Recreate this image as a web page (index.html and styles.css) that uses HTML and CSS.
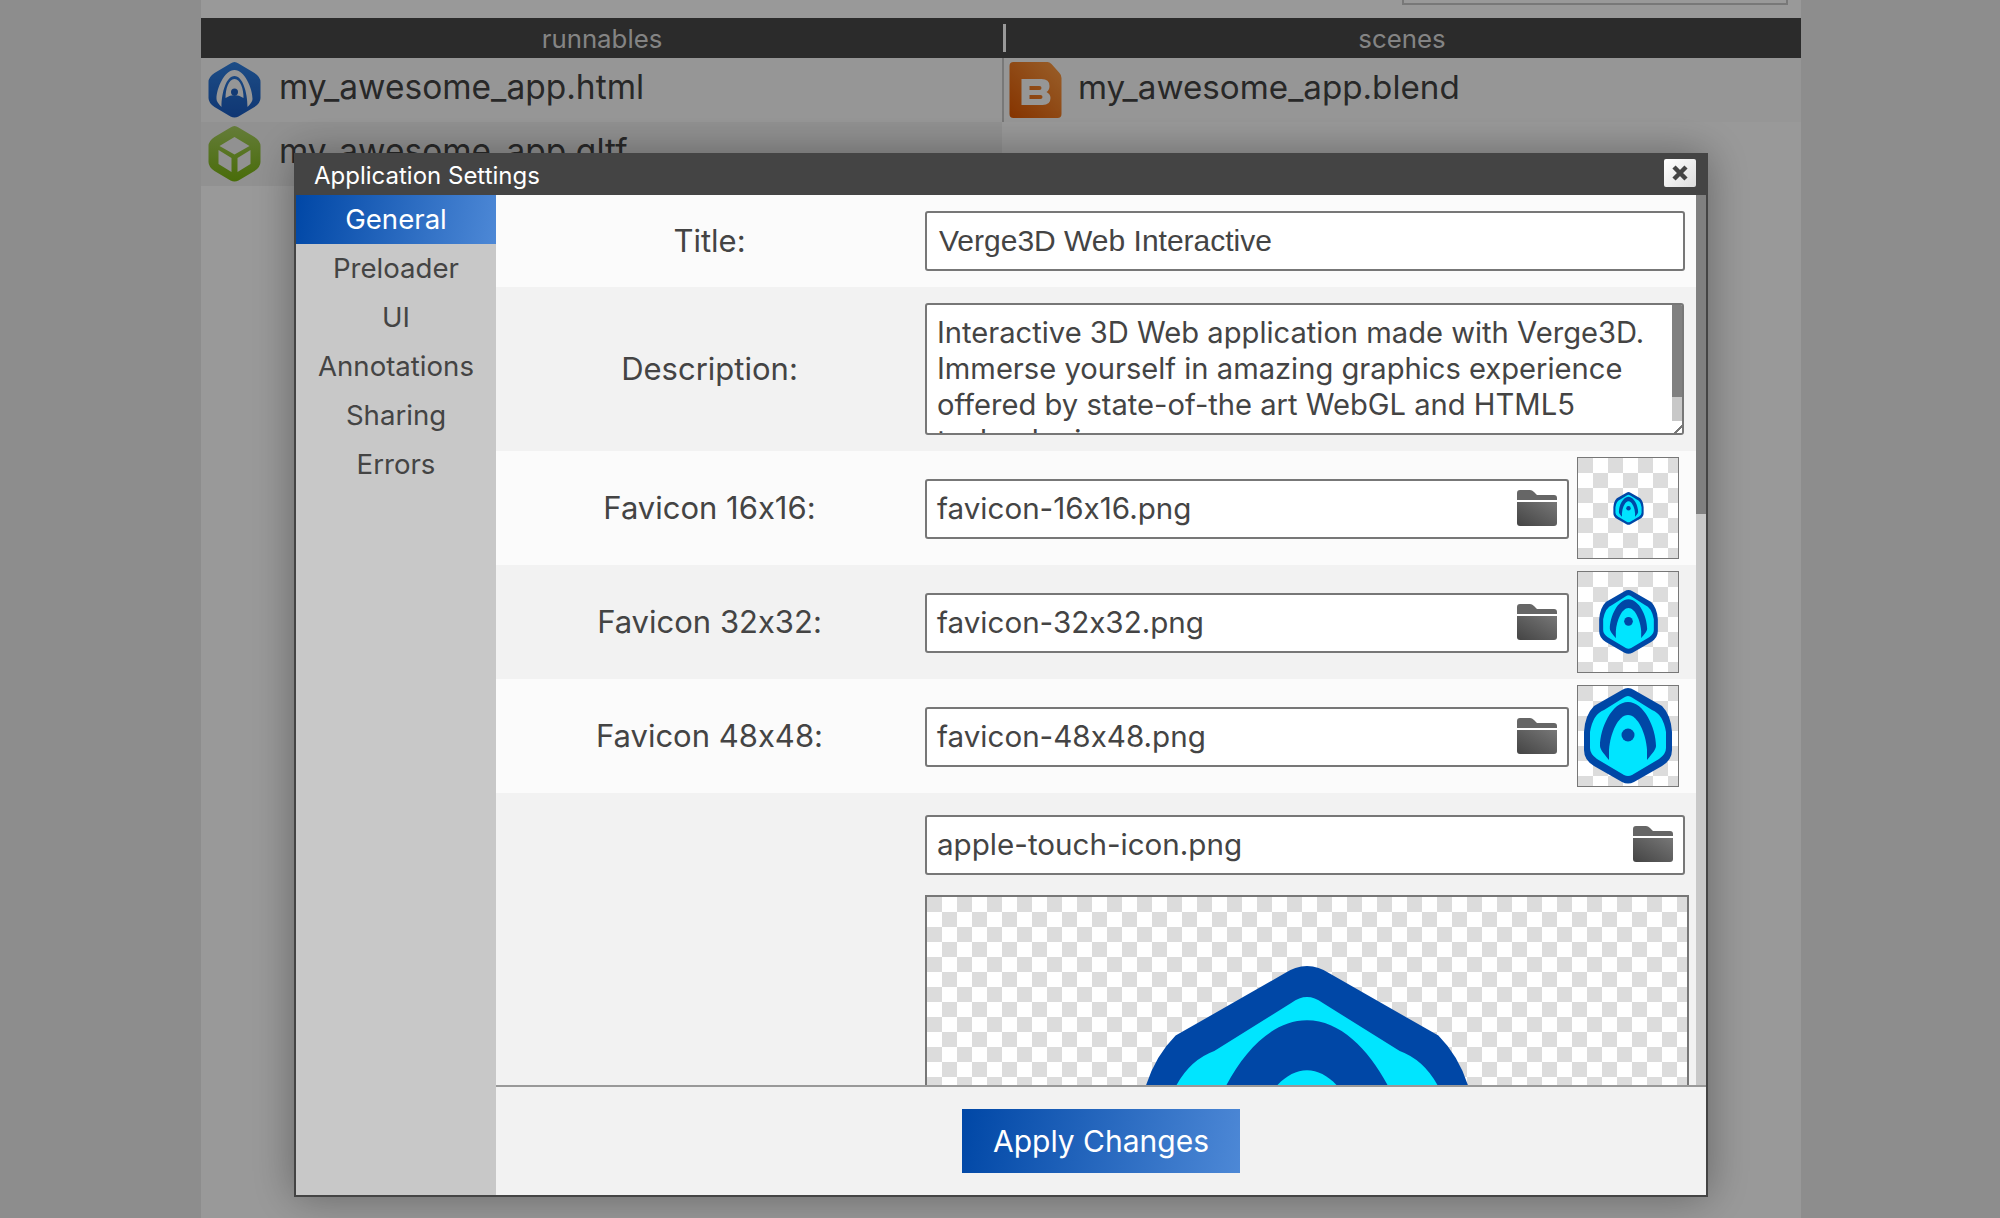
FILE: index.html
```html
<!DOCTYPE html>
<html lang="en">
<head>
<meta charset="UTF-8">
<title>Application Settings</title>
<link rel="stylesheet" href="styles.css">
</head>
<body>

<svg class="defs" width="0" height="0">
  <symbol id="favicon" viewBox="0 0 88 96">
    <path d="M44 0 Q47 0 50 2 L78 18 Q87 27 88 44 V62 Q88 72 78 78 L50 94 Q44 97 38 94 L10 78 Q0 72 0 62 V44 Q1 27 10 18 L38 2 Q41 0 44 0 Z" fill="#0047a6"/>
    <path d="M44 8 Q46 8 48 9.500 L68 22 Q79 26 82 44 V60 Q82 66 75 71 L48 87 Q44 89 40 87 L13 71 Q6 66 6 60 V44 Q9 26 20 22 L40 9.500 Q42 8 44 8 Z" fill="#00e5ff"/>
    <path d="M44 14 C28 14 16 40 16 58 C16 62 22 68 25 72 H63 C66 68 72 62 72 58 C72 40 60 14 44 14 Z" fill="#0047a6"/>
    <path d="M44 27 C34 27 26 46 25 62 V76 Q44 88 63 76 V62 C62 46 54 27 44 27 Z" fill="#00e5ff"/>
    <circle cx="44" cy="47" r="6.500" fill="#0047a6"/>
  </symbol>
  <symbol id="folder" viewBox="0 0 40 36">
    <path d="M0 10 V3 Q0 0 3 0 H13 Q15 0 17 2 L20 5 H37 Q40 5 40 8 V10 Z" fill="#666"/>
    <path d="M0 12 H40 V33 Q40 36 37 36 H3 Q0 36 0 33 Z" fill="url(#folderFill)"/>
  </symbol>
  <linearGradient id="folderFill" x1="0" y1="1" x2="1" y2="0">
    <stop offset="0" stop-color="#444"/>
    <stop offset="1" stop-color="#777"/>
  </linearGradient>
  <linearGradient id="blueIcon" x1="0" y1="0" x2="0" y2="1">
    <stop offset="0" stop-color="#3080e0"/>
    <stop offset="1" stop-color="#1a5bc0"/>
  </linearGradient>
  <linearGradient id="greenIcon" x1="0" y1="0" x2="0" y2="1">
    <stop offset="0" stop-color="#a8cf60"/>
    <stop offset="1" stop-color="#7ab510"/>
  </linearGradient>
  <linearGradient id="orangeIcon" x1="1" y1="0" x2="0" y2="1">
    <stop offset="0" stop-color="#ff9e46"/>
    <stop offset="1" stop-color="#df5700"/>
  </linearGradient>
</svg>

<div class="page">
  <div class="top-strip"><div class="search-box"></div></div>

  <div class="columns-head">
    <div class="col-title">runnables</div>
    <div class="col-title col-title-right">scenes</div>
  </div>

  <div class="columns">
    <div class="col col-left">
      <div class="file-row">
        <svg class="file-icon" viewBox="0 0 52 56">
          <path d="M26 0 Q28 0 30 1.500 L46 11 Q52 15 52 20 V36 Q52 41 46 45 L30 54.500 Q26 56.500 22 54.500 L6 45 Q0 41 0 36 V20 Q0 15 6 11 L22 1.500 Q24 0 26 0 Z" fill="url(#blueIcon)"/>
          <path d="M26 8 C16 8 8 26 8 37 Q8 40 13 45 C13 30 18 14 26 14 C34 14 39 30 39 45 Q44 40 44 37 C44 26 36 8 26 8 Z" fill="#fbfbfb"/>
          <path d="M26 17 C20 17 17 27 17 36 Q26 30 35 36 C35 27 32 17 26 17 Z" fill="#fbfbfb"/>
          <circle cx="26" cy="30" r="3.500" fill="#1f62c4"/>
        </svg>
        <span class="file-name">my_awesome_app.html</span>
      </div>
      <div class="file-row file-row-alt">
        <svg class="file-icon" viewBox="0 0 52 56">
          <path d="M26 0 Q28 0 30 1.500 L46 11 Q52 15 52 20 V36 Q52 41 46 45 L30 54.500 Q26 56.500 22 54.500 L6 45 Q0 41 0 36 V20 Q0 15 6 11 L22 1.500 Q24 0 26 0 Z" fill="url(#greenIcon)"/>
          <path d="M26 11 L41 20 L26 28.500 L11 20 Z M10 24 L23 32 V46 L10 38 Z M42 24 L29 32 V46 L42 38 Z" fill="#f2f2f2"/>
        </svg>
        <span class="file-name">my_awesome_app.gltf</span>
      </div>
    </div>
    <div class="col">
      <div class="file-row file-row-right">
        <svg class="file-icon" viewBox="0 0 52 56">
          <path d="M4 0 H38 Q40 0 42 2 L50 11 Q52 13 52 16 V52 Q52 56 48 56 H4 Q0 56 0 52 V4 Q0 0 4 0 Z" fill="url(#orangeIcon)"/>
          <path fill-rule="evenodd" d="M12 17 H32 Q40 17 40 24 Q40 28 37 30 Q41 32 41 36 Q41 43 33 43 H12 Z M20 24 V28 H30 Q32 28 32 26 Q32 24 30 24 Z M20 33 V37 H31 Q33 37 33 35 Q33 33 31 33 Z" fill="#fbfbfb"/>
        </svg>
        <span class="file-name">my_awesome_app.blend</span>
      </div>
    </div>
  </div>
</div>

<div class="overlay">
  <div class="dialog">
    <div class="dialog-title">
      <span>Application Settings</span>
      <button class="close-btn" type="button">
        <svg class="close-x" viewBox="0 0 16 16"><path d="M2 2 L14 14 M14 2 L2 14" fill="none" stroke="#444" stroke-width="4.500"/></svg>
      </button>
    </div>
    <div class="dialog-main">
      <div class="sidebar">
        <div class="tab tab-active">General</div>
        <div class="tab">Preloader</div>
        <div class="tab">UI</div>
        <div class="tab">Annotations</div>
        <div class="tab">Sharing</div>
        <div class="tab">Errors</div>
      </div>
      <div class="main-col">
        <div class="content">
          <div class="settings">
            <div class="setting setting-title">
              <div class="setting-label">Title:</div>
              <div class="setting-value">
                <div class="field field-plain">Verge3D Web Interactive</div>
              </div>
            </div>
            <div class="setting setting-alt setting-desc">
              <div class="setting-label">Description:</div>
              <div class="setting-value">
                <div class="textarea">
                  <div class="textarea-text">Interactive 3D Web application made with Verge3D. Immerse yourself in amazing graphics experience offered by state-of-the art WebGL and HTML5 technologies.</div>
                  <div class="textarea-scroll"><div class="textarea-thumb"></div><div class="textarea-grip"></div></div>
                </div>
              </div>
            </div>
            <div class="setting setting-icon">
              <div class="setting-label">Favicon 16x16:</div>
              <div class="setting-value">
                <div class="field field-file">favicon-16x16.png<svg class="folder"><use href="#folder"/></svg></div>
                <div class="preview"><svg class="icon-16"><use href="#favicon"/></svg></div>
              </div>
            </div>
            <div class="setting setting-alt setting-icon">
              <div class="setting-label">Favicon 32x32:</div>
              <div class="setting-value">
                <div class="field field-file">favicon-32x32.png<svg class="folder"><use href="#folder"/></svg></div>
                <div class="preview"><svg class="icon-32"><use href="#favicon"/></svg></div>
              </div>
            </div>
            <div class="setting setting-icon">
              <div class="setting-label">Favicon 48x48:</div>
              <div class="setting-value">
                <div class="field field-file">favicon-48x48.png<svg class="folder"><use href="#folder"/></svg></div>
                <div class="preview"><svg class="icon-48"><use href="#favicon"/></svg></div>
              </div>
            </div>
            <div class="setting setting-alt setting-touch">
              <div class="setting-label"></div>
              <div class="setting-value setting-stack">
                <div class="field field-file field-wide">apple-touch-icon.png<svg class="folder"><use href="#folder"/></svg></div>
                <div class="preview-large"><svg class="icon-large"><use href="#favicon"/></svg></div>
              </div>
            </div>
          </div>
          <div class="scrollbar"><div class="scrollbar-thumb"></div></div>
        </div>
        <div class="dialog-footer">
          <button class="apply-btn" type="button">Apply Changes</button>
        </div>
      </div>
    </div>
  </div>
</div>

</body>
</html>
```

FILE: styles.css
```css
* {
  box-sizing: border-box;
}
html, body {
  height: 100%;
}
body {
  margin: 0;
  background-color: #ebebeb;
  color: #444;
  font-family: Inter, "Noto Sans", sans-serif;
  font-feature-settings: "calt" 0;
  overflow: hidden;
}
.defs {
  position: absolute;
}
.page {
  width: 1600px;
  height: 100%;
  margin-left: 201px;
  background-color: #fff;
}
.top-strip {
  height: 18px;
  display: flex;
  justify-content: flex-end;
  padding-right: 13px;
}
.search-box {
  width: 386px;
  height: 5px;
  border: 2px solid #c8c8c8;
  border-top: 0;
}
.columns-head {
  display: flex;
  height: 40px;
  background-color: #484848;
  color: #ddd;
  font-size: 25.800px;
}
.col-title {
  width: 802px;
  display: flex;
  align-items: center;
  justify-content: center;
}
.col-title-right {
  flex: 1;
  position: relative;
}
.col-title-right::before {
  content: "";
  position: absolute;
  left: 0;
  top: 6px;
  bottom: 6px;
  width: 3px;
  background-color: #fff;
}
.columns {
  display: flex;
}
.col {
  flex: 1;
}
.col-left {
  flex: none;
  width: 801px;
}
.file-row {
  height: 64px;
  display: flex;
  padding: 4px 0 0 7px;
  font-size: 33.500px;
  background-color: #fbfbfb;
}
.file-row-alt {
  background-color: #f2f2f2;
}
.file-row-right {
  border-left: 2px solid #c8c8c8;
  padding-left: 5px;
  font-size: 33.200px;
}
.file-icon {
  width: 53px;
  height: 56px;
  flex: none;
}
.file-name {
  margin-left: 18px;
  line-height: 51px;
}
.file-row-right .file-name {
  margin-left: 16px;
}

/* modal */
.overlay {
  position: fixed;
  left: 0;
  top: 0;
  right: 0;
  bottom: 0;
  background-color: rgba(0, 0, 0, 0.4);
}
.dialog {
  position: absolute;
  left: 294px;
  top: 153px;
  width: 1414px;
  height: 1044px;
  display: flex;
  flex-direction: column;
  border: 2px solid #444;
  border-top: 0;
  background-color: #f2f2f2;
  box-shadow: 0 0 40px rgba(0, 0, 0, 0.35);
}
.dialog-title {
  height: 42px;
  flex: none;
  margin: 0 -2px;
  padding: 2px 12px 0 20px;
  display: flex;
  align-items: center;
  justify-content: space-between;
  background-color: #444;
  color: #fff;
  font-size: 24px;
}
.close-btn {
  width: 32px;
  height: 28px;
  margin-top: -4px;
  padding: 0;
  display: flex;
  align-items: center;
  justify-content: center;
  border: 0;
  border-radius: 2px;
  background: linear-gradient(135deg, #fff, #ddd);
}
.close-x {
  width: 16px;
  height: 16px;
}
.dialog-main {
  flex: 1;
  display: flex;
  min-height: 0;
}
.sidebar {
  width: 200px;
  flex: none;
  background-color: #c8c8c8;
  font-size: 27.600px;
}
.tab {
  height: 49px;
  text-align: center;
  line-height: 49px;
}
.tab-active {
  background: linear-gradient(100deg, #0047a6, #4d88d6);
  color: #fff;
}
.main-col {
  flex: 1;
  min-width: 0;
  display: flex;
  flex-direction: column;
}
.content {
  flex: 1;
  min-height: 0;
  display: flex;
  background-color: #f2f2f2;
}
.settings {
  flex: 1;
  min-width: 0;
  overflow: hidden;
}
.setting {
  display: flex;
  background-color: #fbfbfb;
}
.setting-alt {
  background-color: #f2f2f2;
}
.setting-title {
  height: 92px;
  padding-top: 16px;
}
.setting-desc {
  height: 164px;
  padding-top: 16px;
}
.setting-icon {
  height: 114px;
  align-items: center;
}
.setting-touch {
  padding-top: 22px;
  align-items: flex-start;
}
.setting-label {
  width: 429px;
  padding-right: 2px;
  flex: none;
  align-self: center;
  text-align: center;
  font-size: 31px;
}
.setting-icon .setting-label {
  padding-bottom: 2px;
}
.setting-title .setting-label, .setting-desc .setting-label {
  padding-bottom: 18px;
}
.setting-value {
  display: flex;
  align-items: center;
  gap: 8px;
}
.setting-title .setting-value, .setting-desc .setting-value {
  align-items: flex-start;
}
.setting-stack {
  flex-direction: column;
  align-items: flex-start;
  gap: 20px;
}
.field {
  height: 60px;
  display: flex;
  align-items: center;
  justify-content: space-between;
  padding: 0 10px 2px 10px;
  border: 2px solid #777;
  border-radius: 3px;
  background-color: #fff;
  font-size: 29.600px;
}
.setting-icon .field {
  margin-top: 1px;
}
.field-plain {
  width: 760px;
  padding-left: 12px;
  padding-bottom: 0;
  font-family: "Liberation Sans", Arial, sans-serif;
  font-size: 30px;
}
.field-file {
  width: 644px;
}
.field-wide {
  width: 760px;
}
.folder {
  width: 40px;
  height: 36px;
}
.textarea {
  position: relative;
  width: 759px;
  height: 132px;
  padding: 10px 24px 0 10px;
  overflow: hidden;
  border: 2px solid #777;
  border-radius: 3px;
  background-color: #fff;
  font-size: 29.150px;
  line-height: 36px;
}
.textarea-scroll {
  position: absolute;
  right: 0;
  top: 0;
  bottom: 0;
  width: 10px;
  display: flex;
  flex-direction: column;
  background-color: #c8c8c8;
}
.textarea-thumb {
  height: 92px;
  background-color: #808080;
}
.textarea-grip {
  margin-top: auto;
  height: 12px;
  background: linear-gradient(135deg, #fff 60%, #777 60% 75%, #fff 75%);
}
.preview, .preview-large {
  display: flex;
  justify-content: center;
  border: 1px solid #777;
  background-color: #fff;
  background-image: conic-gradient(#fff 25%, #dcdcdc 25% 50%, #fff 50% 75%, #dcdcdc 75%);
  background-size: 30px 30px;
}
.preview {
  width: 102px;
  height: 102px;
  align-items: center;
}
.preview-large {
  width: 764px;
  height: 400px;
  border-width: 2px;
  padding-top: 69px;
}
.icon-16 {
  width: 31px;
  height: 33px;
  filter: blur(0.6px);
}
.icon-32 {
  width: 59px;
  height: 64px;
  filter: blur(0.4px);
}
.icon-48 {
  width: 88px;
  height: 96px;
  filter: blur(0.4px);
}
.icon-large {
  width: 340px;
  height: 371px;
}
.scrollbar {
  width: 10px;
  flex: none;
  background-color: #c8c8c8;
}
.scrollbar-thumb {
  height: 319px;
  background-color: #808080;
}
.dialog-footer {
  height: 110px;
  flex: none;
  display: flex;
  padding: 22px 0 0 466px;
  border-top: 2px solid #999;
  background-color: #f2f2f2;
}
.apply-btn {
  width: 278px;
  height: 64px;
  border: 0;
  background: linear-gradient(100deg, #0047a6, #4d88d6);
  color: #fff;
  font-family: inherit;
  font-size: 30px;
}
```
